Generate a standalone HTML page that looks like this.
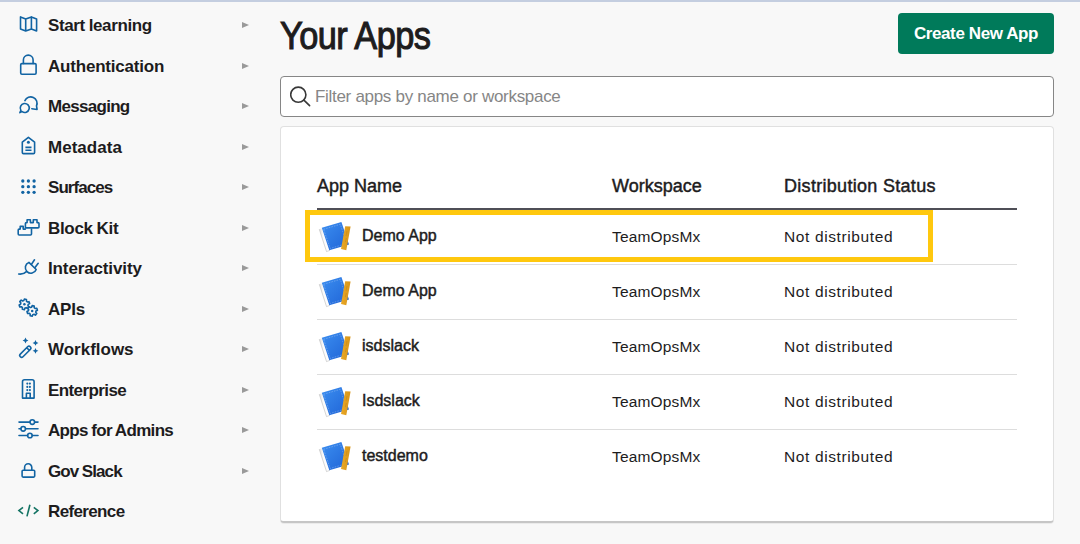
<!DOCTYPE html>
<html>
<head>
<meta charset="utf-8">
<style>
html,body{margin:0;padding:0;}
body{width:1080px;height:544px;overflow:hidden;background:#f8f8f8;position:relative;font-family:"Liberation Sans",sans-serif;color:#1d1c1d;}
.topbar{position:absolute;left:0;top:0;width:1080px;height:2px;background:#c4cee0;}
.nav{position:absolute;left:48px;font-weight:bold;font-size:17px;letter-spacing:-0.2px;word-spacing:-0.5px;line-height:20px;white-space:nowrap;color:#1d1c1d;}
.arr{position:absolute;left:242px;width:0;height:0;border-left:7px solid #9a9a9a;border-top:3px solid transparent;border-bottom:3px solid transparent;}
.icons{position:absolute;left:0;top:0;}
h1{position:absolute;left:280px;top:14px;margin:0;font-size:39px;font-weight:normal;-webkit-text-stroke:1.1px #1d1c1d;letter-spacing:-0.6px;line-height:44px;white-space:nowrap;color:#1d1c1d;transform-origin:0 0;transform:scaleX(0.88);}
.btn{position:absolute;left:898px;top:13px;width:156px;height:41px;background:#007a5a;border-radius:4px;color:#fff;font-weight:bold;font-size:17px;letter-spacing:-0.4px;line-height:41px;text-align:center;white-space:nowrap;}
.search{position:absolute;left:280px;top:76px;width:772px;height:39px;border:1px solid #868686;border-radius:4px;background:#fff;}
.ph{position:absolute;left:34px;top:10px;font-size:17px;letter-spacing:-0.3px;line-height:20px;color:#868686;white-space:nowrap;}
.card{position:absolute;left:280px;top:126px;width:772px;height:394px;border:1px solid #e0e0e0;border-bottom:2px solid #c6c6c6;border-radius:4px;background:#fff;box-shadow:0 1px 0 rgba(0,0,0,0.05);}
.th{position:absolute;font-size:18px;line-height:22px;white-space:nowrap;color:#1d1c1d;-webkit-text-stroke:0.45px #1d1c1d;}
.hline{position:absolute;left:317px;top:208px;width:700px;height:2px;background:#4f4f57;}
.sep{position:absolute;left:317px;width:700px;height:1px;background:#dddddd;}
.name{position:absolute;left:362px;font-weight:normal;font-size:16px;-webkit-text-stroke:0.45px #1d1c1d;letter-spacing:0px;line-height:18px;white-space:nowrap;color:#1d1c1d;}
.ws{position:absolute;left:612px;font-size:15.5px;letter-spacing:0.15px;line-height:18px;white-space:nowrap;color:#1d1c1d;}
.st{position:absolute;left:784px;font-size:15.5px;letter-spacing:0.62px;line-height:18px;white-space:nowrap;color:#1d1c1d;}
.hl{position:absolute;left:305px;top:210px;width:618px;height:42px;border:5px solid #ffc80e;}
.appic{position:absolute;left:314px;width:42px;height:42px;}
</style>
</head>
<body>
<div class="topbar"></div>

<!-- sidebar -->
<div class="nav" style="top:16px;letter-spacing:-0.38px">Start learning</div>
<div class="nav" style="top:56.5px">Authentication</div>
<div class="nav" style="top:97px;letter-spacing:-0.7px">Messaging</div>
<div class="nav" style="top:137.5px;letter-spacing:0.03px">Metadata</div>
<div class="nav" style="top:178px;letter-spacing:-0.95px">Surfaces</div>
<div class="nav" style="top:218.5px;letter-spacing:-0.325px">Block Kit</div>
<div class="nav" style="top:259px;letter-spacing:-0.13px">Interactivity</div>
<div class="nav" style="top:299.5px">APIs</div>
<div class="nav" style="top:340px;letter-spacing:-0.01px">Workflows</div>
<div class="nav" style="top:380.5px;letter-spacing:-0.59px">Enterprise</div>
<div class="nav" style="top:421px;letter-spacing:-0.68px">Apps for Admins</div>
<div class="nav" style="top:461.5px;letter-spacing:-0.885px">Gov Slack</div>
<div class="nav" style="top:502px;letter-spacing:-0.64px">Reference</div>

<div class="arr" style="top:22px"></div>
<div class="arr" style="top:62.5px"></div>
<div class="arr" style="top:103px"></div>
<div class="arr" style="top:143.5px"></div>
<div class="arr" style="top:184px"></div>
<div class="arr" style="top:224.5px"></div>
<div class="arr" style="top:265px"></div>
<div class="arr" style="top:305.5px"></div>
<div class="arr" style="top:346px"></div>
<div class="arr" style="top:386.5px"></div>
<div class="arr" style="top:427px"></div>
<div class="arr" style="top:467.5px"></div>

<svg class="icons" width="270" height="544" viewBox="0 0 270 544" fill="none" stroke="#1264a3" stroke-width="1.6" stroke-linejoin="round" stroke-linecap="round">
<!-- map -->
<path d="M20.5,16.9 L25.7,19 L31.4,16.9 L36.6,19 L36.6,31 L31.4,28.9 L25.7,31 L20.5,28.9 Z M25.7,19 L25.7,31 M31.4,16.9 L31.4,28.9"/>
<!-- lock 1 -->
<path d="M23.4,63.4 L23.4,60 A4.85,4.85 0 0 1 33.1,60 L33.1,63.4"/>
<rect x="20.7" y="63.6" width="15.4" height="10.6" rx="1.2"/>
<!-- messaging -->
<path d="M19.9,112.6 L20.9,110.3 A4.5,4.5 0 1 1 22.1,111.6 Z"/>
<path d="M24.9,100.6 A6.2,6.2 0 1 1 36.5,105.8 L37.1,109.5 L31.8,108.7"/>
<!-- metadata tag -->
<path d="M22.3,142.2 L28.4,137.3 L34.6,142.2 L34.6,152.4 Q34.6,153.6 33.4,153.6 L23.5,153.6 Q22.3,153.6 22.3,152.4 Z"/>
<circle cx="28.4" cy="142.3" r="1.5" fill="#1264a3" stroke="none"/>
<path d="M25.4,147.4 L31.5,147.4 M25.4,150.3 L31.5,150.3" stroke-linecap="butt"/>
<!-- surfaces dots -->
<g fill="#1264a3" stroke="none">
<circle cx="22.8" cy="181" r="1.65"/><circle cx="28.4" cy="181" r="1.65"/><circle cx="34.1" cy="181" r="1.65"/>
<circle cx="22.8" cy="186.7" r="1.65"/><circle cx="28.4" cy="186.7" r="1.65"/><circle cx="34.1" cy="186.7" r="1.65"/>
<circle cx="22.8" cy="192.3" r="1.65"/><circle cx="28.4" cy="192.3" r="1.65"/><circle cx="34.1" cy="192.3" r="1.65"/>
</g>
<!-- block kit -->
<path d="M25.4,227.9 L25.4,223.6 Q25.4,222.6 26.4,222.6 L27.1,222.6 L27.1,219.7 L30.4,219.7 L30.4,222.6 L33.3,222.6 L33.3,219.7 L37,219.7 L37,222.6 L38,222.6 Q39,222.6 39,223.6 L39,226.9 Q39,227.9 38,227.9 Z"/>
<path d="M18.2,234 L18.2,230.1 Q18.2,229.1 19.2,229.1 L20.2,229.1 L20.2,226.4 L23.2,226.4 L23.2,229.1 L25.4,229.1 M31.5,229.1 L31.5,234 Q31.5,235 30.5,235 L19.2,235 Q18.2,235 18.2,234"/>
<!-- interactivity plug -->
<path d="M18.7,274 Q23.4,274.6 26.4,271.6"/>
<path d="M28.9,262.4 L36.2,269.5 A5.6,5.6 0 1 1 28.9,262.4 Z"/>
<path d="M31.5,264.2 L34.5,259.8 M35,267.6 L38.2,263.3"/>
<!-- apis gears -->
<path d="M23.82,300.54 L24.42,299.00 L26.45,299.41 L26.40,301.07 L27.36,301.92 L29.00,301.67 L29.66,303.63 L28.20,304.41 L27.94,305.67 L28.98,306.97 L27.61,308.52 L26.20,307.65 L24.98,308.06 L24.38,309.60 L22.35,309.19 L22.40,307.53 L21.44,306.68 L19.80,306.93 L19.14,304.97 L20.60,304.19 L20.86,302.93 L19.82,301.63 L21.19,300.08 L22.60,300.95 Z"/>
<circle cx="24.4" cy="304.3" r="1.25" fill="#1264a3" stroke="none"/>
<path d="M31.62,307.14 L32.22,305.60 L34.25,306.01 L34.20,307.67 L35.16,308.52 L36.80,308.27 L37.46,310.23 L36.00,311.01 L35.74,312.27 L36.78,313.57 L35.41,315.12 L34.00,314.25 L32.78,314.66 L32.18,316.20 L30.15,315.79 L30.20,314.13 L29.24,313.28 L27.60,313.53 L26.94,311.57 L28.40,310.79 L28.66,309.53 L27.62,308.23 L28.99,306.68 L30.40,307.55 Z"/>
<circle cx="32.2" cy="310.9" r="1.25" fill="#1264a3" stroke="none"/>
<!-- workflows wand -->
<path d="M20.3,354.1 L27.6,346.8 A1.9,1.9 0 0 1 30.3,349.5 L23,356.8 A1.9,1.9 0 0 1 20.3,354.1 Z M26.7,347.7 L29.4,350.4"/>
<g fill="#1264a3" stroke="none">
<path d="M25.5,337.6 Q25.9,340.1 28.4,340.5 Q25.9,340.9 25.5,343.4 Q25.1,340.9 22.6,340.5 Q25.1,340.1 25.5,337.6 Z"/>
<path d="M35.5,340 Q35.9,342.5 38.4,342.9 Q35.9,343.3 35.5,345.8 Q35.1,343.3 32.6,342.9 Q35.1,342.5 35.5,340 Z"/>
<path d="M35.5,347.9 Q35.9,350.4 38.4,350.8 Q35.9,351.2 35.5,353.7 Q35.1,351.2 32.6,350.8 Q35.1,350.4 35.5,347.9 Z"/>
</g>
<!-- enterprise building -->
<path d="M22.5,398.1 L22.5,381.7 Q22.5,379.7 24.5,379.7 L32.1,379.7 Q34.1,379.7 34.1,381.7 L34.1,398.1 Z M26.4,398.1 L26.4,393.3 L30.2,393.3 L30.2,398.1"/>
<g fill="#1264a3" stroke="none">
<circle cx="27.3" cy="383.6" r="1.05"/><circle cx="29.9" cy="383.6" r="1.05"/>
<circle cx="27.3" cy="386.9" r="1.05"/><circle cx="29.9" cy="386.9" r="1.05"/>
<circle cx="27.3" cy="390.1" r="1.05"/><circle cx="29.9" cy="390.1" r="1.05"/>
</g>
<!-- sliders -->
<path d="M19,422.1 L30,422.1 M34.6,422.1 L38,422.1 M19,428.8 L20.9,428.8 M25.5,428.8 L38,428.8 M19,435.5 L27.6,435.5 M32.2,435.5 L38,435.5"/>
<circle cx="32.3" cy="422.1" r="2.3"/>
<circle cx="23.2" cy="428.8" r="2.3"/>
<circle cx="29.9" cy="435.5" r="2.3"/>
<!-- gov lock -->
<path d="M24.6,470.2 L24.6,467.4 A3.6,3.6 0 0 1 31.8,467.4 L31.8,470.2"/>
<rect x="22.1" y="470.3" width="12.6" height="6.8" rx="1"/>
<!-- reference -->
<g stroke="#137363" stroke-width="1.6" stroke-linecap="butt" stroke-linejoin="miter">
<path d="M23,507.3 L18.9,510.6 L23,513.9"/>
<path d="M33.8,507.3 L37.9,510.6 L33.8,513.9"/>
<path d="M29.9,504.8 L27,516.4"/>
</g>
</svg>

<!-- main -->
<h1>Your Apps</h1>
<div class="btn">Create New App</div>
<div class="search"><svg style="position:absolute;left:9px;top:9px" width="22" height="22" viewBox="0 0 22 22" fill="none" stroke="#383838" stroke-width="1.6" stroke-linecap="round"><circle cx="8.3" cy="8.7" r="7.6"/><path d="M13.9,14.1 L19.6,19.6"/></svg><div class="ph">Filter apps by name or workspace</div></div>
<div class="card"></div>

<div class="th" style="left:317px;top:175px">App Name</div>
<div class="th" style="left:612px;top:175px">Workspace</div>
<div class="th" style="left:784px;top:175px;letter-spacing:0.3px">Distribution Status</div>
<div class="hline"></div>
<div class="sep" style="top:264px"></div>
<div class="sep" style="top:319px"></div>
<div class="sep" style="top:374px"></div>
<div class="sep" style="top:429px"></div>

<div class="name" style="top:227px">Demo App</div>
<div class="name" style="top:282px">Demo App</div>
<div class="name" style="top:337px">isdslack</div>
<div class="name" style="top:392px">Isdslack</div>
<div class="name" style="top:447px">testdemo</div>

<div class="ws" style="top:228px">TeamOpsMx</div>
<div class="ws" style="top:283px">TeamOpsMx</div>
<div class="ws" style="top:338px">TeamOpsMx</div>
<div class="ws" style="top:393px">TeamOpsMx</div>
<div class="ws" style="top:448px">TeamOpsMx</div>

<div class="st" style="top:228px">Not distributed</div>
<div class="st" style="top:283px">Not distributed</div>
<div class="st" style="top:338px">Not distributed</div>
<div class="st" style="top:393px">Not distributed</div>
<div class="st" style="top:448px">Not distributed</div>

<svg class="appic" style="top:217px" width="42" height="42" viewBox="0 0 42 42">
<defs>
<linearGradient id="bkG" x1="0" y1="0" x2="1" y2="1"><stop offset="0" stop-color="#3b8ef0"/><stop offset="1" stop-color="#1f63d6"/></linearGradient>
<linearGradient id="pgG" x1="0" y1="0" x2="1" y2="0"><stop offset="0" stop-color="#d8d8d8"/><stop offset="0.35" stop-color="#fafafa"/><stop offset="1" stop-color="#ffffff"/></linearGradient>
<linearGradient id="rlG" x1="0" y1="0" x2="1" y2="0"><stop offset="0" stop-color="#e9a826"/><stop offset="1" stop-color="#d99518"/></linearGradient>
</defs>
<path d="M5.2,12.2 L8.6,11 L15.8,33.4 L12.4,34.6 Z" fill="url(#pgG)"/><path d="M5.3,12.3 L12.5,34.5" stroke="#c4c4c4" stroke-width="0.7"/><path d="M12.4,34.6 L15.8,33.4" stroke="#bdbdbd" stroke-width="0.6"/>
<path d="M7.8,10.8 L27.4,5 L35,27.5 L15.3,33.2 Z" fill="url(#bkG)"/>
<path d="M9.6,12.3 L26.3,7.3 L32.7,26.5 L16.2,31.4 Z" fill="none" stroke="#ffffff" stroke-opacity="0.55" stroke-width="0.45" stroke-dasharray="1.6 1.1"/>
<path d="M31.2,9.2 L36.6,9.6 L32.3,33.2 L27,32 Z" fill="url(#rlG)"/>
<path d="M33,14 L32,19 M32.3,21 L31.4,25" stroke="#a86e10" stroke-width="0.5" stroke-opacity="0.6"/>
</svg><svg class="appic" style="top:272px" width="42" height="42" viewBox="0 0 42 42">
<defs>
<linearGradient id="bkG" x1="0" y1="0" x2="1" y2="1"><stop offset="0" stop-color="#3b8ef0"/><stop offset="1" stop-color="#1f63d6"/></linearGradient>
<linearGradient id="pgG" x1="0" y1="0" x2="1" y2="0"><stop offset="0" stop-color="#d8d8d8"/><stop offset="0.35" stop-color="#fafafa"/><stop offset="1" stop-color="#ffffff"/></linearGradient>
<linearGradient id="rlG" x1="0" y1="0" x2="1" y2="0"><stop offset="0" stop-color="#e9a826"/><stop offset="1" stop-color="#d99518"/></linearGradient>
</defs>
<path d="M5.2,12.2 L8.6,11 L15.8,33.4 L12.4,34.6 Z" fill="url(#pgG)"/><path d="M5.3,12.3 L12.5,34.5" stroke="#c4c4c4" stroke-width="0.7"/><path d="M12.4,34.6 L15.8,33.4" stroke="#bdbdbd" stroke-width="0.6"/>
<path d="M7.8,10.8 L27.4,5 L35,27.5 L15.3,33.2 Z" fill="url(#bkG)"/>
<path d="M9.6,12.3 L26.3,7.3 L32.7,26.5 L16.2,31.4 Z" fill="none" stroke="#ffffff" stroke-opacity="0.55" stroke-width="0.45" stroke-dasharray="1.6 1.1"/>
<path d="M31.2,9.2 L36.6,9.6 L32.3,33.2 L27,32 Z" fill="url(#rlG)"/>
<path d="M33,14 L32,19 M32.3,21 L31.4,25" stroke="#a86e10" stroke-width="0.5" stroke-opacity="0.6"/>
</svg><svg class="appic" style="top:327px" width="42" height="42" viewBox="0 0 42 42">
<defs>
<linearGradient id="bkG" x1="0" y1="0" x2="1" y2="1"><stop offset="0" stop-color="#3b8ef0"/><stop offset="1" stop-color="#1f63d6"/></linearGradient>
<linearGradient id="pgG" x1="0" y1="0" x2="1" y2="0"><stop offset="0" stop-color="#d8d8d8"/><stop offset="0.35" stop-color="#fafafa"/><stop offset="1" stop-color="#ffffff"/></linearGradient>
<linearGradient id="rlG" x1="0" y1="0" x2="1" y2="0"><stop offset="0" stop-color="#e9a826"/><stop offset="1" stop-color="#d99518"/></linearGradient>
</defs>
<path d="M5.2,12.2 L8.6,11 L15.8,33.4 L12.4,34.6 Z" fill="url(#pgG)"/><path d="M5.3,12.3 L12.5,34.5" stroke="#c4c4c4" stroke-width="0.7"/><path d="M12.4,34.6 L15.8,33.4" stroke="#bdbdbd" stroke-width="0.6"/>
<path d="M7.8,10.8 L27.4,5 L35,27.5 L15.3,33.2 Z" fill="url(#bkG)"/>
<path d="M9.6,12.3 L26.3,7.3 L32.7,26.5 L16.2,31.4 Z" fill="none" stroke="#ffffff" stroke-opacity="0.55" stroke-width="0.45" stroke-dasharray="1.6 1.1"/>
<path d="M31.2,9.2 L36.6,9.6 L32.3,33.2 L27,32 Z" fill="url(#rlG)"/>
<path d="M33,14 L32,19 M32.3,21 L31.4,25" stroke="#a86e10" stroke-width="0.5" stroke-opacity="0.6"/>
</svg><svg class="appic" style="top:382px" width="42" height="42" viewBox="0 0 42 42">
<defs>
<linearGradient id="bkG" x1="0" y1="0" x2="1" y2="1"><stop offset="0" stop-color="#3b8ef0"/><stop offset="1" stop-color="#1f63d6"/></linearGradient>
<linearGradient id="pgG" x1="0" y1="0" x2="1" y2="0"><stop offset="0" stop-color="#d8d8d8"/><stop offset="0.35" stop-color="#fafafa"/><stop offset="1" stop-color="#ffffff"/></linearGradient>
<linearGradient id="rlG" x1="0" y1="0" x2="1" y2="0"><stop offset="0" stop-color="#e9a826"/><stop offset="1" stop-color="#d99518"/></linearGradient>
</defs>
<path d="M5.2,12.2 L8.6,11 L15.8,33.4 L12.4,34.6 Z" fill="url(#pgG)"/><path d="M5.3,12.3 L12.5,34.5" stroke="#c4c4c4" stroke-width="0.7"/><path d="M12.4,34.6 L15.8,33.4" stroke="#bdbdbd" stroke-width="0.6"/>
<path d="M7.8,10.8 L27.4,5 L35,27.5 L15.3,33.2 Z" fill="url(#bkG)"/>
<path d="M9.6,12.3 L26.3,7.3 L32.7,26.5 L16.2,31.4 Z" fill="none" stroke="#ffffff" stroke-opacity="0.55" stroke-width="0.45" stroke-dasharray="1.6 1.1"/>
<path d="M31.2,9.2 L36.6,9.6 L32.3,33.2 L27,32 Z" fill="url(#rlG)"/>
<path d="M33,14 L32,19 M32.3,21 L31.4,25" stroke="#a86e10" stroke-width="0.5" stroke-opacity="0.6"/>
</svg><svg class="appic" style="top:437px" width="42" height="42" viewBox="0 0 42 42">
<defs>
<linearGradient id="bkG" x1="0" y1="0" x2="1" y2="1"><stop offset="0" stop-color="#3b8ef0"/><stop offset="1" stop-color="#1f63d6"/></linearGradient>
<linearGradient id="pgG" x1="0" y1="0" x2="1" y2="0"><stop offset="0" stop-color="#d8d8d8"/><stop offset="0.35" stop-color="#fafafa"/><stop offset="1" stop-color="#ffffff"/></linearGradient>
<linearGradient id="rlG" x1="0" y1="0" x2="1" y2="0"><stop offset="0" stop-color="#e9a826"/><stop offset="1" stop-color="#d99518"/></linearGradient>
</defs>
<path d="M5.2,12.2 L8.6,11 L15.8,33.4 L12.4,34.6 Z" fill="url(#pgG)"/><path d="M5.3,12.3 L12.5,34.5" stroke="#c4c4c4" stroke-width="0.7"/><path d="M12.4,34.6 L15.8,33.4" stroke="#bdbdbd" stroke-width="0.6"/>
<path d="M7.8,10.8 L27.4,5 L35,27.5 L15.3,33.2 Z" fill="url(#bkG)"/>
<path d="M9.6,12.3 L26.3,7.3 L32.7,26.5 L16.2,31.4 Z" fill="none" stroke="#ffffff" stroke-opacity="0.55" stroke-width="0.45" stroke-dasharray="1.6 1.1"/>
<path d="M31.2,9.2 L36.6,9.6 L32.3,33.2 L27,32 Z" fill="url(#rlG)"/>
<path d="M33,14 L32,19 M32.3,21 L31.4,25" stroke="#a86e10" stroke-width="0.5" stroke-opacity="0.6"/>
</svg>
<div class="hl"></div>

</body>
</html>
